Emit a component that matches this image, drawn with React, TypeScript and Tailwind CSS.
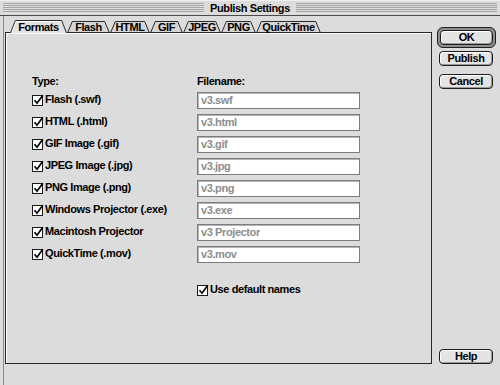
import React from "react";

const FONT = { fontFamily: '"Liberation Sans", Arial, sans-serif' };

function Check() {
  return (
    <svg width="12" height="12" viewBox="0 0 12 12" className="shrink-0">
      <rect x="0.5" y="1.5" width="10" height="10" fill="#fff" stroke="#1a1a1a" />
      <path d="M2.5 6.2 L5 9.2 L10.8 1.2" fill="none" stroke="#000" strokeWidth="1.7" />
    </svg>
  );
}

const tabs = [
  { name: "Formats", w: 57, sel: true },
  { name: "Flash", w: 43 },
  { name: "HTML", w: 40 },
  { name: "GIF", w: 33 },
  { name: "JPEG", w: 38 },
  { name: "PNG", w: 35 },
  { name: "QuickTime", w: 65 },
];

function Tab({ name, w, sel }: { name: string; w: number; sel?: boolean }) {
  const h = sel ? 13 : 12;
  return (
    <div className="relative flex items-center justify-center" style={{ width: w, height: h }}>
      <svg width={w} height={h} className="absolute left-0 top-0">
        <polygon points={`0,${h} 5,0.5 ${w - 5},0.5 ${w},${h}`} fill={sel ? "#e2e2e2" : "#d6d6d6"} />
        {sel && (
          <path d={`M1.8 ${h} L5.8 1.5 L${w - 6} 1.5`} fill="none" stroke="#fff" strokeWidth="1" />
        )}
        <path d={`M0.5 ${h} L5.3 0.5 L${w - 5.3} 0.5 L${w - 0.5} ${h}`} fill="none" stroke="#2a2a2a" strokeWidth="1" />
        {!sel && <line x1="0" y1={h - 0.5} x2={w} y2={h - 0.5} stroke="#2a2a2a" />}
      </svg>
      <span className="relative text-[11px] font-bold leading-[11px] tracking-[-0.4px] text-black mt-[1px]">{name}</span>
    </div>
  );
}

const rows = [
  ["Flash  (.swf)", "v3.swf"],
  ["HTML (.html)", "v3.html"],
  ["GIF Image (.gif)", "v3.gif"],
  ["JPEG Image (.jpg)", "v3.jpg"],
  ["PNG Image (.png)", "v3.png"],
  ["Windows Projector (.exe)", "v3.exe"],
  ["Macintosh Projector", "v3 Projector"],
  ["QuickTime (.mov)", "v3.mov"],
];

function Btn({ label, cls = "" }: { label: string; cls?: string }) {
  return (
    <div
      className={`h-[15px] w-[53px] rounded-[4px] border border-[#1e1e1e] bg-[#e4e4e4] shadow-[inset_1px_1px_0_#fff,inset_-1px_-1px_0_#9a9a9a] flex items-center justify-center text-[11px] font-bold tracking-[-0.4px] leading-none text-black ${cls}`}
    >
      {label}
    </div>
  );
}

export default function App() {
  return (
    <div className="w-[500px] h-[385px] bg-[#dcdcdc] flex flex-col overflow-hidden" style={FONT}>
      {/* title bar */}
      <div className="h-[16px] shrink-0 flex items-center px-[3px] border-b border-[#4a4a4a] bg-[#dcdcdc] border-t border-t-[#f0f0f0]">
        <div className="flex-1 h-[10px] bg-[repeating-linear-gradient(to_bottom,#a4a4a4_0px,#a4a4a4_1px,#dedede_1px,#dedede_2px)]" />
        <div className="px-[6px] text-[11px] font-bold tracking-[-0.4px] leading-none text-black">Publish Settings</div>
        <div className="flex-1 h-[10px] bg-[repeating-linear-gradient(to_bottom,#a4a4a4_0px,#a4a4a4_1px,#dedede_1px,#dedede_2px)]" />
      </div>

      {/* body */}
      <div className="flex flex-1 ml-[3px] border-l border-[#8a8a8a] pb-[21px]">
        {/* left column */}
        <div className="flex flex-col pt-[4px] pl-[1px] w-[428px]">
          <div className="flex items-end h-[13px] ml-[5px] -mb-px relative z-10">
            {tabs.map((t) => (
              <Tab key={t.name} {...t} />
            ))}
          </div>
          <div className="flex-1 border border-[#262626] bg-[#dcdcdc] shadow-[inset_1px_1px_0_#fbfbfb] pl-[26px] pt-[42px] text-[11px] font-bold tracking-[-0.4px] text-black">
            <div className="grid grid-cols-[165px_163px] leading-[13px]">
              <div>Type:</div>
              <div>Filename:</div>
            </div>
            <div className="flex flex-col gap-[5px] mt-[4px]">
              {rows.map(([label, file]) => (
                <div key={label} className="grid grid-cols-[165px_163px] items-center h-[17px]">
                  <div className="flex items-center gap-[1px] -mt-[2px]">
                    <Check />
                    <span className="leading-[13px]">{label}</span>
                  </div>
                  <div className="h-[17px] border border-[#7c7c7c] bg-white shadow-[inset_1px_1px_0_#b4b4b4] flex items-center pl-[3px] text-[#8d8d8d]">
                    {file}
                  </div>
                </div>
              ))}
            </div>
            <div className="grid grid-cols-[165px_163px] mt-[20px]">
              <div />
              <div className="flex items-center gap-[1px]">
                <Check />
                <span className="leading-[13px]">Use default names</span>
              </div>
            </div>
          </div>
        </div>

        {/* right column */}
        <div className="flex flex-col ml-[5px] w-[59px] pt-[11px]">
          <div className="h-[21px] w-[59px] rounded-[6px] border border-[#1e1e1e] bg-[#8e8e8e] p-[2px]">
            <Btn label="OK" cls="w-[53px]" />
          </div>
          <Btn label="Publish" cls="mt-[3px] ml-[2px] w-[54px]" />
          <Btn label="Cancel" cls="mt-[8px] ml-[2px] w-[54px]" />
          <Btn label="Help" cls="mt-auto ml-[2px] w-[54px]" />
        </div>
      </div>
    </div>
  );
}
